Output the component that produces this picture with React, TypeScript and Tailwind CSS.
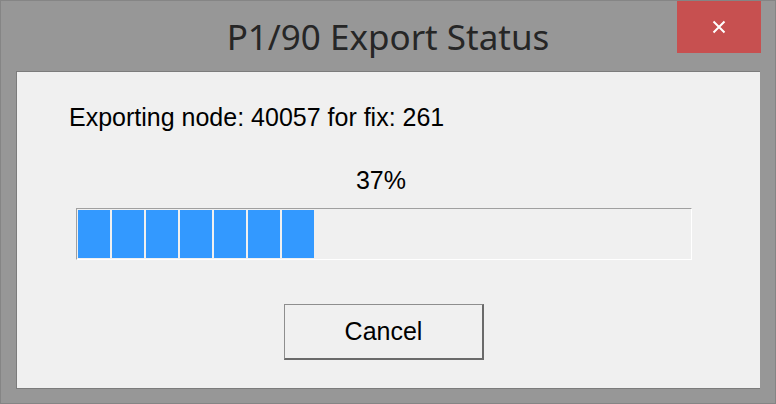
import React from 'react';

const PROGRESS_BLOCKS = 7;

const CloseGlyph: React.FC = () => (
  <svg width="14" height="14" viewBox="0 0 14 14" fill="none">
    <path d="M1.5 1.5 L12.5 12.5 M12.5 1.5 L1.5 12.5" stroke="#ffffff" strokeWidth="2" />
  </svg>
);

const ProgressBar: React.FC<{ blocks: number }> = ({ blocks }) => (
  <div className="ml-[59px] mt-[13px] flex h-[52px] w-[616px] gap-[2px] border border-t-[#a0a0a0] border-l-[#a0a0a0] border-r-white border-b-white p-[1px]">
    {[...Array(blocks)].map((_, i) => (
      <div key={i} className="h-[48px] w-[32px] bg-[#3399ff]" />
    ))}
  </div>
);

export default function App() {
  return (
    <div className="flex h-[404px] w-[776px] flex-col border border-[#858585] bg-[#979797] font-['Liberation_Sans',Arial,sans-serif]">
      <div className="relative h-[70px] pt-[12px] text-center">
        <span className="font-['Noto_Sans',sans-serif] text-[35px] leading-[48px] text-[#262626]">P1/90 Export Status</span>
        <button className="absolute right-[14px] top-0 flex h-[52px] w-[84px] items-center justify-center bg-[#c75050]">
          <CloseGlyph />
        </button>
      </div>

      <div className="mx-[15px] flex h-[318px] flex-col border-t border-l border-b border-[#7c7c7c] bg-[#f0f0f0] pt-[31px] text-black">
        <p className="pl-[52px] text-[25px] leading-[29px]">Exporting node: 40057 for fix: 261</p>
        <p className="ml-[59px] mt-[34px] w-[616px] pr-[6px] text-center text-[25px] leading-[29px]">37%</p>
        <ProgressBar blocks={PROGRESS_BLOCKS} />
        <button className="ml-[267px] mt-[44px] flex h-[56px] w-[200px] items-center justify-center border-t border-l border-r-2 border-b-2 border-t-[#8e8e8e] border-l-[#8e8e8e] border-r-[#6a6a6a] border-b-[#6a6a6a] bg-[#f0f0f0] text-[25px] leading-[29px] text-black">
          Cancel
        </button>
      </div>
    </div>
  );
}
